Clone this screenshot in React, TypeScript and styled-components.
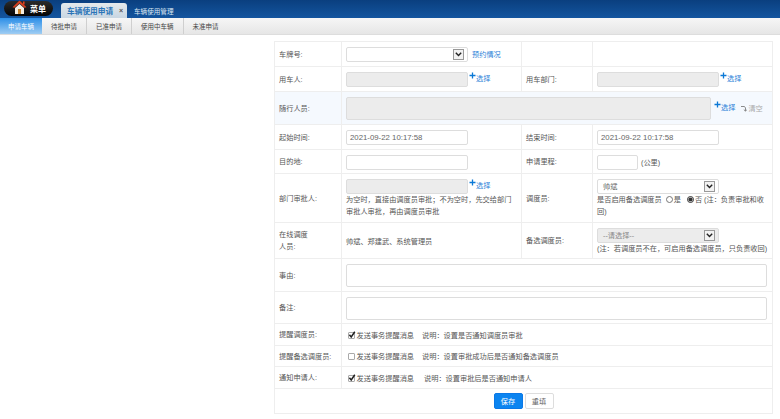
import React from 'react';
import styled, { createGlobalStyle } from 'styled-components';

const GlobalStyle = createGlobalStyle`
  html, body {
    margin: 0;
    padding: 0;
    background: #fff;
    font-family: 'Liberation Sans', 'Noto Sans CJK SC', sans-serif;
    font-size: 7.2px;
    color: #555;
  }
`;

const subTabs = ['申请车辆', '待批申请', '已准申请', '使用中车辆', '未准申请'];

// full-width punctuation used by the hints
const COMMA = '\uFF0C';
const SEMI = '\uFF1B';
const COLON = '\uFF1A';

const approverHint = `为空时${COMMA}直接由调度员审批${SEMI}不为空时${COMMA}先交给部门审批人审批${COMMA}再由调度员审批`;
const dispatcherHint = `否 (注${COLON}负责审批和收`;
const backupHint = `(注${COLON}若调度员不在${COMMA}可启用备选调度员${COMMA}只负责收回)`;

function HomeIcon() {
  return (
    <HomeSvg width="15" height="15" viewBox="0 0 15 15">
      <path d="M7.5 0.5 L0.5 7.2 L2.4 7.8 L7.5 3.2 L12.6 7.8 L14.5 7.2 Z" fill="#d9401f" />
      <path d="M3 8 L7.5 4 L12 8 V14 H3 Z" fill="#f6efe2" />
      <rect x="6" y="9" width="3" height="5" fill="#c9862f" />
      <rect x="11" y="1.5" width="1.6" height="3" fill="#d9401f" />
    </HomeSvg>
  );
}

function Plus() {
  return (
    <svg width="7" height="7" viewBox="0 0 7 7">
      <path d="M3.5 0.5 V6.5 M0.5 3.5 H6.5" stroke="#0b78d6" strokeWidth="1.3" />
    </svg>
  );
}

function Pick() {
  return (
    <PickLink>
      <Plus />
      <span>选择</span>
    </PickLink>
  );
}

function Arrow({ $grey }: { $grey?: boolean }) {
  return (
    <ArrowBox>
      <svg width="7" height="5" viewBox="0 0 7 5">
        <path d="M0.8 0.8 L3.5 3.6 L6.2 0.8" fill="none" stroke={$grey ? '#666' : '#222'} strokeWidth="1.4" />
      </svg>
    </ArrowBox>
  );
}

function Notify({ checked, note, gap = 8 }: { checked?: boolean; note: string; gap?: number }) {
  return (
    <Inline $gap={gap}>
      <CheckLabel>
        <CheckBox>
          {checked && (
            <svg width="8" height="8" viewBox="0 0 8 8">
              <path d="M1.4 3.8 L3.2 6 L6.8 0.8" fill="none" stroke="#222" strokeWidth="1.5" />
            </svg>
          )}
        </CheckBox>
        发送事务提醒消息
      </CheckLabel>
      <span>{`说明${COLON}${note}`}</span>
    </Inline>
  );
}

export default function App() {
  return (
    <>
      <GlobalStyle />
      <Header>
        <MenuPill>
          <HomeIcon />
          <span>菜单</span>
        </MenuPill>
        <ActiveTab>
          <span>车辆使用申请</span>
          <Close>×</Close>
        </ActiveTab>
        <PlainTab>车辆使用管理</PlainTab>
      </Header>
      <SubNav>
        {subTabs.map((t, i) => (
          <SubTab key={t} $active={i === 0}>
            {t}
          </SubTab>
        ))}
      </SubNav>
      <Page>
        <FormTable>
          <colgroup>
            <col style={{ width: 67 }} />
            <col style={{ width: 180 }} />
            <col style={{ width: 71 }} />
            <col style={{ width: 180 }} />
          </colgroup>
          <tbody>
            <Row $h={25}>
              <Label>车牌号:</Label>
              <Value>
                <Inline $gap={4}>
                  <SelectBox />
                  <LinkText>预约情况</LinkText>
                </Inline>
              </Value>
              <Label />
              <Value />
            </Row>
            <Row $h={25}>
              <Label>用车人:</Label>
              <Value>
                <Inline>
                  <Field $grey />
                  <Pick />
                </Inline>
              </Value>
              <Label>用车部门:</Label>
              <Value>
                <Inline>
                  <Field $grey />
                  <Pick />
                </Inline>
              </Value>
            </Row>
            <Row $h={33} $tint>
              <Label>随行人员:</Label>
              <Value colSpan={3}>
                <Inline $gap={2}>
                  <WideField />
                  <Pick />
                  <ClearLink>
                    <svg width="7" height="7" viewBox="0 0 7 7">
                      <path d="M1 1.5 H4.5 L5.5 3 V6 M3.8 4.6 L5.5 6.2 L6.8 4.6" fill="none" stroke="#8a8a8a" strokeWidth="1" />
                    </svg>
                    清空
                  </ClearLink>
                </Inline>
              </Value>
            </Row>
            <Row $h={25}>
              <Label>起始时间:</Label>
              <Value>
                <Field>2021-09-22 10:17:58</Field>
              </Value>
              <Label>结束时间:</Label>
              <Value>
                <Field>2021-09-22 10:17:58</Field>
              </Value>
            </Row>
            <Row $h={24}>
              <Label>目的地:</Label>
              <Value>
                <Field />
              </Value>
              <Label>申请里程:</Label>
              <Value>
                <Inline $gap={3}>
                  <ShortField />
                  <span>(公里)</span>
                </Inline>
              </Value>
            </Row>
            <Row $h={49}>
              <Label>部门审批人:</Label>
              <Value>
                <Inline>
                  <Field $grey />
                  <Pick />
                </Inline>
                <Hint>{approverHint}</Hint>
              </Value>
              <Label>调度员:</Label>
              <Value>
                <SelectBox>帅斌</SelectBox>
                <Hint>
                  是否启用备选调度员
                  <Radio type="radio" readOnly checked={false} $left={4} />是
                  <Radio type="radio" readOnly checked $left={6} />
                  {dispatcherHint}
                  <br />
                  回)
                </Hint>
              </Value>
            </Row>
            <Row $h={36}>
              <Label>
                在线调度
                <br />
                人员:
              </Label>
              <Value>帅斌、郑建武、系统管理员</Value>
              <Label>备选调度员:</Label>
              <Value>
                <SelectBox $grey>--请选择--</SelectBox>
                <Hint>{backupHint}</Hint>
              </Value>
            </Row>
            <Row $h={33}>
              <Label>事由:</Label>
              <Value colSpan={3}>
                <TextBlock />
              </Value>
            </Row>
            <Row $h={32}>
              <Label>备注:</Label>
              <Value colSpan={3}>
                <TextBlock />
              </Value>
            </Row>
            <Row $h={22}>
              <Label>提醒调度员:</Label>
              <Value colSpan={3}>
                <Notify checked note="设置是否通知调度员审批" />
              </Value>
            </Row>
            <Row $h={21}>
              <Label>提醒备选调度员:</Label>
              <Value colSpan={3}>
                <Notify note="设置审批成功后是否通知备选调度员" />
              </Value>
            </Row>
            <Row $h={22}>
              <Label>通知申请人:</Label>
              <Value colSpan={3}>
                <Notify checked gap={10} note="设置审批后是否通知申请人" />
              </Value>
            </Row>
            <Row $h={25}>
              <ButtonCell colSpan={4}>
                <Buttons>
                  <SaveButton>保存</SaveButton>
                  <ResetButton>重填</ResetButton>
                </Buttons>
              </ButtonCell>
            </Row>
          </tbody>
        </FormTable>
      </Page>
    </>
  );
}

const Header = styled.div`
  height: 18px;
  display: flex;
  align-items: flex-end;
  background: linear-gradient(#0a3f7f, #14559f);
  padding-left: 4px;
`;

const MenuPill = styled.div`
  width: 49px;
  height: 15px;
  margin-bottom: 2px;
  border-radius: 8px;
  background: linear-gradient(#2b2b2b, #050505);
  display: flex;
  align-items: center;
  gap: 3px;
  padding-left: 8px;
  box-sizing: border-box;
  color: #fff;
  font-size: 8px;
  font-weight: 700;
`;

const HomeSvg = styled.svg`
  margin-top: -3px;
`;

const ActiveTab = styled.div`
  width: 66px;
  height: 15px;
  margin-left: 8px;
  box-sizing: border-box;
  padding: 0 4px 0 6px;
  border-radius: 3px 3px 0 0;
  background: linear-gradient(#e4e9ec, #c8d6e2);
  color: #2a74b8;
  display: flex;
  align-items: center;
  justify-content: space-between;
  font-size: 7.7px;
  font-weight: 700;
`;

const Close = styled.span`
  color: #555;
  font-size: 7px;
`;

const PlainTab = styled.div`
  height: 15px;
  margin-left: 7px;
  display: flex;
  align-items: center;
  color: #dbe6f3;
  font-size: 6.6px;
`;

const SubNav = styled.div`
  height: 17px;
  display: flex;
  background: linear-gradient(#f6f6f6, #e6e6e6);
  border-bottom: 1px solid #ddd;
  box-sizing: border-box;
`;

const SubTab = styled.div<{ $active?: boolean }>`
  width: ${({ $active }) => ($active ? '42px' : 'auto')};
  padding: 0 ${({ $active }) => ($active ? '0' : '9px')};
  display: flex;
  align-items: center;
  justify-content: center;
  font-size: 6.5px;
  color: ${({ $active }) => ($active ? '#fff' : '#444')};
  background: ${({ $active }) => ($active ? 'linear-gradient(#2c8fe8, #9fcdf3)' : 'none')};
  border-right: ${({ $active }) => ($active ? 'none' : '1px solid #cfcfcf')};
  &:last-child {
    border-right: none;
  }
`;

const Page = styled.div`
  padding: 6px 8px 0 274px;
`;

const FormTable = styled.table`
  width: 498px;
  table-layout: fixed;
  border-collapse: collapse;
  border: 1px solid #eee;
`;

const Row = styled.tr<{ $h: number; $tint?: boolean }>`
  height: ${({ $h }) => $h}px;
  background: ${({ $tint }) => ($tint ? '#f5f9fe' : '#fff')};
`;

const Label = styled.td`
  padding: 1px 0 0 4px;
  border: 1px solid #eee;
  line-height: 12px;
  white-space: nowrap;
`;

const Value = styled.td`
  padding: 1px 4px 0;
  border: 1px solid #eee;
  line-height: 11px;
`;

const ButtonCell = styled.td`
  border: 1px solid #eee;
  padding: 0;
`;

const Buttons = styled.div`
  display: flex;
  justify-content: center;
  gap: 2px;
`;

const Inline = styled.div<{ $gap?: number }>`
  display: flex;
  align-items: center;
  gap: ${({ $gap }) => $gap ?? 0}px;
  white-space: nowrap;
`;

const Field = styled.div<{ $grey?: boolean }>`
  width: 122px;
  height: 15px;
  box-sizing: border-box;
  flex: none;
  border: 1px solid #ddd;
  border-radius: 2px;
  background: ${({ $grey }) => ($grey ? '#ececec' : '#fff')};
  padding-left: 3px;
  line-height: 13px;
  font-size: 7.8px;
  color: #666;
`;

const ShortField = styled(Field)`
  width: 41px;
`;

const WideField = styled(Field)`
  width: 365px;
  height: 23px;
  background: #ececec;
`;

const TextBlock = styled(Field)`
  width: 421px;
  height: 23px;
`;

const SelectBox = styled(({ children, className, $grey }: any) => (
  <div className={className}>
    <span>{children}</span>
    <Arrow $grey={$grey} />
  </div>
))<{ $grey?: boolean }>`
  width: 122px;
  height: 15px;
  box-sizing: border-box;
  flex: none;
  border: 1px solid #ddd;
  border-radius: 2px;
  background: ${({ $grey }) => ($grey ? '#ececec' : '#fff')};
  display: flex;
  align-items: center;
  justify-content: space-between;
  padding: 0 3px 0 5px;
  color: ${({ $grey }) => ($grey ? '#888' : '#666')};
`;

const ArrowBox = styled.div`
  width: 11px;
  height: 11px;
  box-sizing: border-box;
  border: 1px solid #999;
  background: #f2f2f2;
  display: flex;
  align-items: center;
  justify-content: center;
`;

const PickLink = styled.div`
  display: flex;
  align-items: flex-start;
  margin-left: 1px;
  color: #2b7fd8;
  position: relative;
  top: -2px;
  line-height: 10px;
  span {
    margin-top: 2px;
  }
`;

const LinkText = styled.span`
  color: #2b7fd8;
`;

const ClearLink = styled.span`
  display: flex;
  align-items: center;
  gap: 1px;
  margin-left: 3px;
  color: #aaa;
`;

const Hint = styled.div`
  line-height: 12px;
`;

const CheckLabel = styled.label`
  display: flex;
  align-items: center;
  gap: 1.5px;
  margin-left: 2px;
`;

const CheckBox = styled.span`
  width: 7px;
  height: 7px;
  box-sizing: border-box;
  border: 1px solid #aaa;
  border-radius: 1px;
  display: flex;
  align-items: center;
  justify-content: center;
  svg {
    flex: none;
  }
`;

const Radio = styled.input<{ $left: number }>`
  width: 7px;
  height: 7px;
  margin: 0 1px 0 ${({ $left }) => $left}px;
  vertical-align: -1px;
  accent-color: #333;
`;

const SaveButton = styled.button`
  width: 29px;
  height: 16px;
  padding: 0;
  border: 1px solid #0b78e6;
  border-radius: 2px;
  background: #0b84f0;
  color: #fff;
  font: inherit;
`;

const ResetButton = styled.button`
  width: 29px;
  height: 16px;
  padding: 0;
  border: 1px solid #ddd;
  border-radius: 2px;
  background: #fff;
  color: #666;
  font: inherit;
`;
